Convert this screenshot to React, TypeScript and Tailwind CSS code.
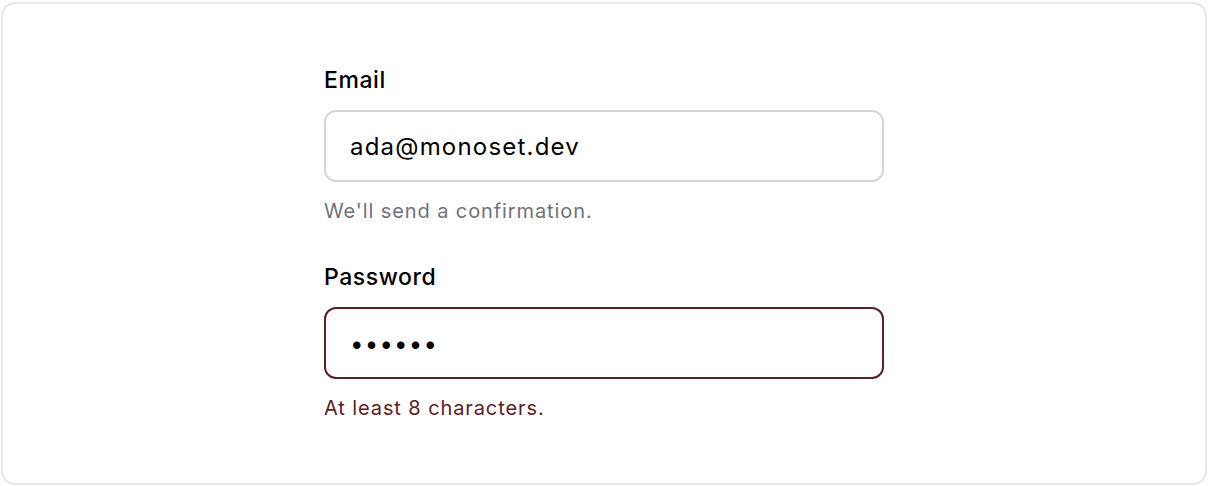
import React from "react";

interface FieldProps {
    label: string;
    type: string;
    value: string;
    hint: string;
    invalid?: boolean;
};

const Field: React.FC<FieldProps> = ({ label, type, value, hint, invalid }) => {
    return (
        <div className="flex flex-col">
            <label className="text-[23px] leading-[32px] font-medium tracking-[0.025em] text-black">{label}</label>
            <input
                type={type}
                defaultValue={value}
                readOnly
                className={
                    invalid
                        ? "mt-[14px] h-[72px] w-full rounded-[12px] border-2 border-[#5a2224] bg-white px-[24px] text-[24px] tracking-[0.05em] text-black outline-none"
                        : "mt-[14px] h-[72px] w-full rounded-[12px] border-2 border-[#d6d6d6] bg-white px-[24px] text-[24px] tracking-[0.05em] text-black outline-none"
                }
            />
            <p
                className={
                    invalid
                        ? "mt-[15px] text-[20px] leading-[28px] tracking-[0.045em] text-[#5a2224]"
                        : "mt-[15px] text-[20px] leading-[28px] tracking-[0.045em] text-[#71717a]"
                }
            >
                {hint}
            </p>
        </div>
    );
};

const App: React.FC = () => {
    return (
        <div className="w-[1208px] h-[486px] px-px pt-[2px] pb-[1px] bg-white font-['Inter',sans-serif]">
            <div className="h-full rounded-[14px] border-2 border-[#e8e8e8] bg-white flex justify-center pt-[60px]">
                <form className="w-[560px] flex flex-col gap-[36px]">
                    <Field label="Email" type="email" value="ada@monoset.dev" hint="We'll send a confirmation." />
                    <Field label="Password" type="password" value="secret" hint="At least 8 characters." invalid />
                </form>
            </div>
        </div>
    );
};

export default App;
